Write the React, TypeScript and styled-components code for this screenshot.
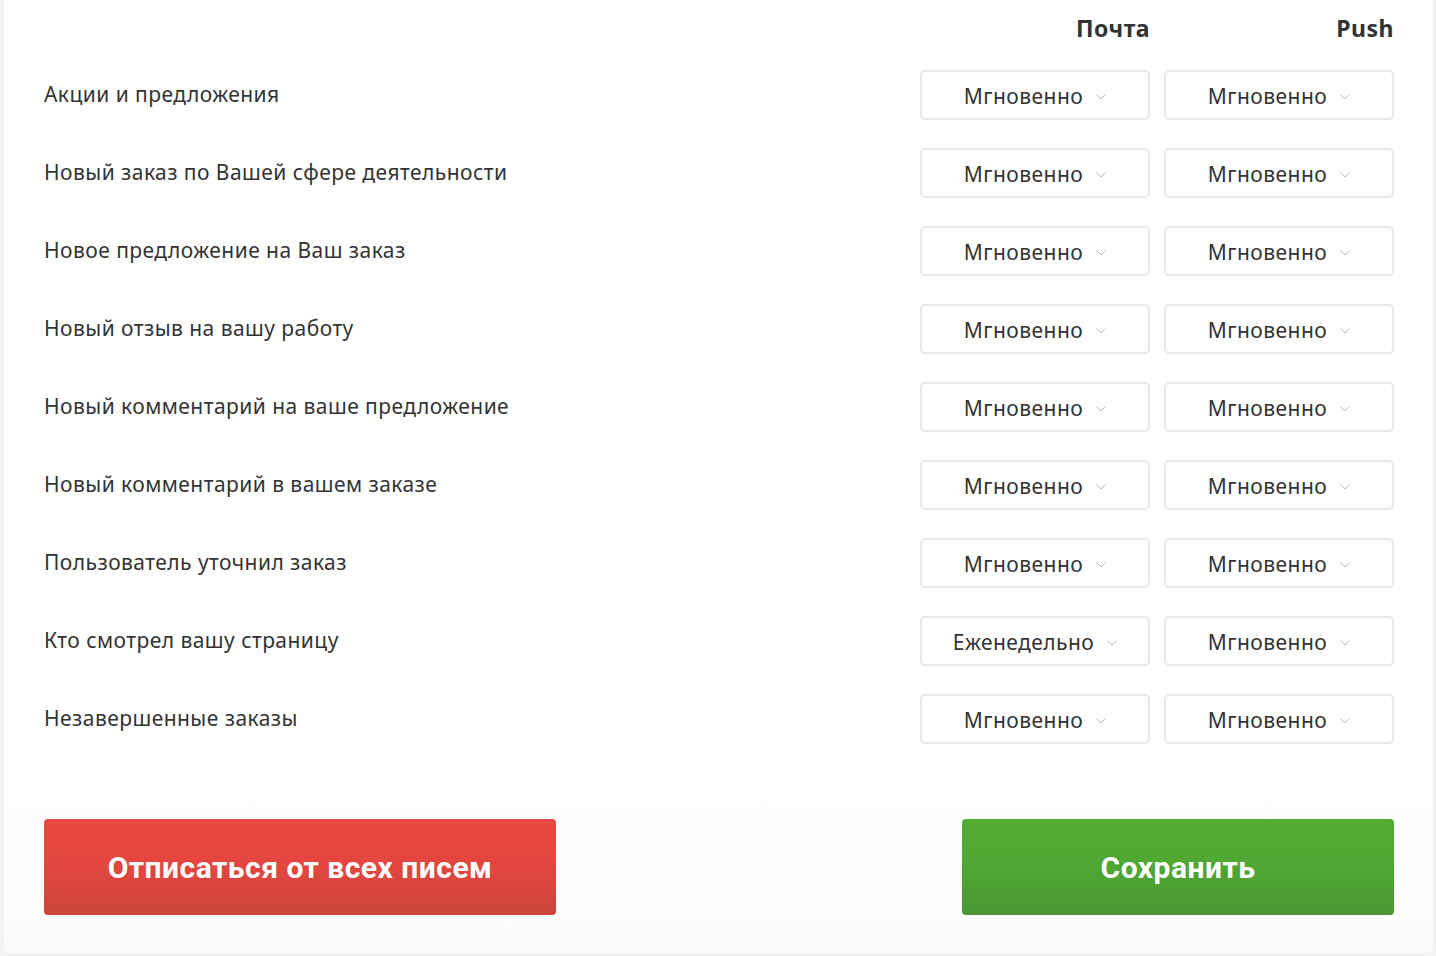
import React from 'react';
import styled, { createGlobalStyle } from 'styled-components';

const GlobalStyle = createGlobalStyle`
  body {
    margin: 0;
    background: #f1f2f4;
    font-family: "Noto Sans", "Open Sans", sans-serif;
    color: #333;
  }
`;

const Card = styled.div`
  box-sizing: border-box;
  height: 953px;
  margin: 0 3px 0 4px;
  padding: 12px 39px 38px 40px;
  background: linear-gradient(180deg, #ffffff 80%, #fbfbfb 100%);
  border-radius: 0 0 6px 6px;
  display: flex;
  flex-direction: column;
`;

const Grid = styled.div`
  display: grid;
  grid-template-columns: 1fr 230px 230px;
  column-gap: 14px;
  align-items: center;
`;

const HeaderRow = styled(Grid)`
  height: 32px;
  margin-bottom: 26px;
`;

const ColTitle = styled.div`
  font-size: 23px;
  font-weight: 700;
  letter-spacing: 0.5px;
  text-align: right;
  color: #333;
`;

const Rows = styled.div`
  display: flex;
  flex-direction: column;
  gap: 28px;
`;

const Row = styled(Grid)`
  height: 50px;
`;

const Label = styled.div`
  font-size: 21px;
  letter-spacing: 0.45px;
  color: #333;
  margin-top: -3px;
`;

const Select = styled.div`
  box-sizing: border-box;
  height: 50px;
  padding-top: 2px;
  border: 2px solid #e8e8e8;
  border-radius: 5px;
  display: flex;
  align-items: center;
  justify-content: center;
  gap: 13px;
  font-size: 21px;
  letter-spacing: 0.45px;
  color: #333;
  background: #fff;
  cursor: pointer;
`;

const Chevron = styled.svg`
  width: 10px;
  height: 6px;
  margin-top: 2px;
`;

const Footer = styled.div`
  margin-top: auto;
  display: flex;
  justify-content: space-between;
`;

const Button = styled.button<{ $tone: 'red' | 'green'; $width: number }>`
  width: ${(p) => p.$width}px;
  height: 96px;
  border: none;
  border-radius: 4px;
  color: #fff;
  font-family: Roboto, "Liberation Sans", sans-serif;
  font-weight: 700;
  font-size: 30px;
  letter-spacing: 0.5px;
  cursor: pointer;
  background: ${(p) =>
    p.$tone === 'red'
      ? 'linear-gradient(180deg, #e94840 0%, #e4463f 45%, #cb453b 100%)'
      : 'linear-gradient(180deg, #52ab33 0%, #4fa833 45%, #4a9733 100%)'};
`;

const notifications = [
  ['Акции и предложения', 'Мгновенно', 'Мгновенно'],
  ['Новый заказ по Вашей сфере деятельности', 'Мгновенно', 'Мгновенно'],
  ['Новое предложение на Ваш заказ', 'Мгновенно', 'Мгновенно'],
  ['Новый отзыв на вашу работу', 'Мгновенно', 'Мгновенно'],
  ['Новый комментарий на ваше предложение', 'Мгновенно', 'Мгновенно'],
  ['Новый комментарий в вашем заказе', 'Мгновенно', 'Мгновенно'],
  ['Пользователь уточнил заказ', 'Мгновенно', 'Мгновенно'],
  ['Кто смотрел вашу страницу', 'Еженедельно', 'Мгновенно'],
  ['Незавершенные заказы', 'Мгновенно', 'Мгновенно'],
];

function Dropdown({ value }: { value: string }) {
  return (
    <Select>
      <span>{value}</span>
      <Chevron viewBox="0 0 10 6">
        <path d="M0.5 0.5 L5 5 L9.5 0.5" fill="none" stroke="#b8b8b8" strokeWidth="1" />
      </Chevron>
    </Select>
  );
}

export default function App() {
  return (
    <>
      <GlobalStyle />
      <Card>
        <HeaderRow>
          <div />
          <ColTitle>Почта</ColTitle>
          <ColTitle>Push</ColTitle>
        </HeaderRow>
        <Rows>
          {notifications.map(([label, mail, push]) => (
            <Row key={label}>
              <Label>{label}</Label>
              <Dropdown value={mail} />
              <Dropdown value={push} />
            </Row>
          ))}
        </Rows>
        <Footer>
          <Button $tone="red" $width={512}>Отписаться от всех писем</Button>
          <Button $tone="green" $width={432}>Сохранить</Button>
        </Footer>
      </Card>
    </>
  );
}
